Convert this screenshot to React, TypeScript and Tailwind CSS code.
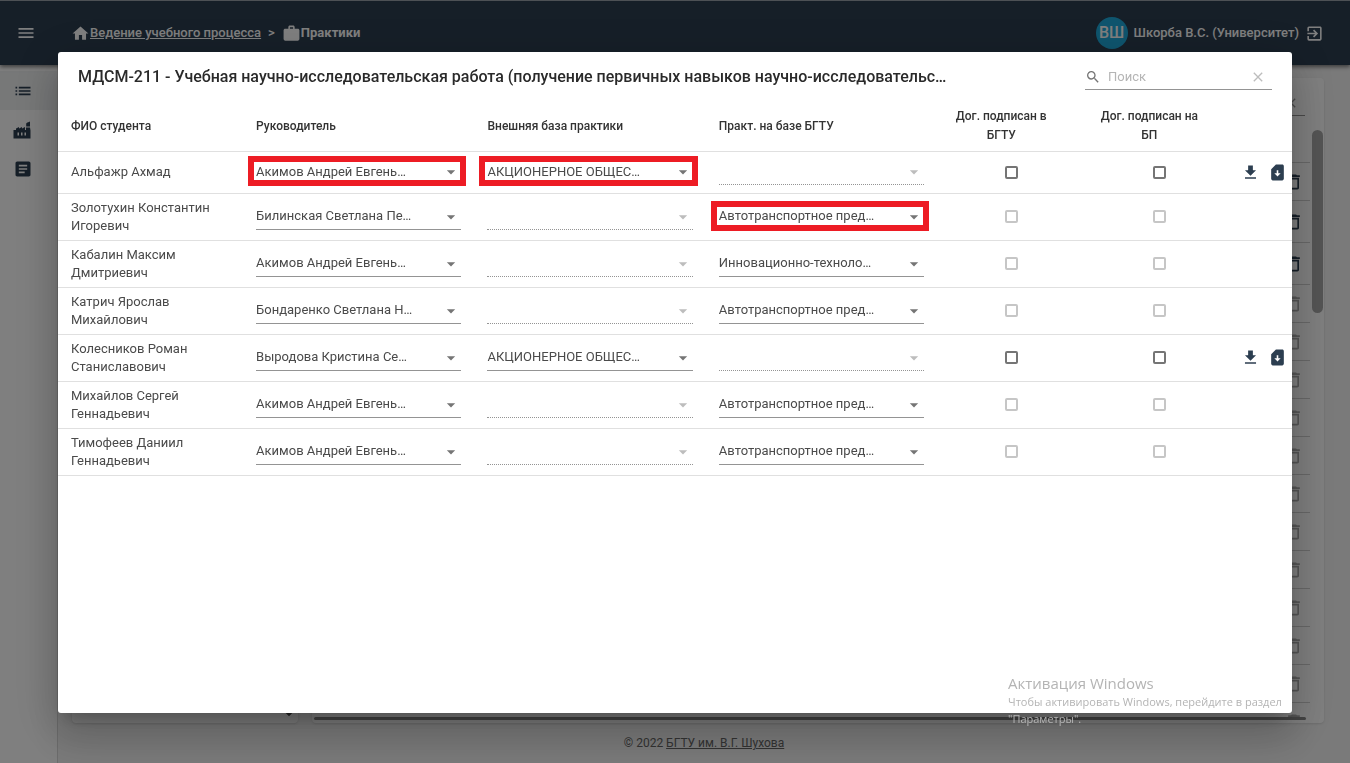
import { useState } from 'react'
import {
  MdMenu,
  MdHome,
  MdWork,
  MdExitToApp,
  MdList,
  MdArticle,
  MdSearch,
  MdClose,
  MdArrowDropDown,
  MdFileDownload,
  MdSimCardDownload,
  MdDeleteOutline,
} from 'react-icons/md'

type Student = {
  name: string
  head: string
  external?: string
  internal?: string
  marks?: string[]
}

const students: Student[] = [
  { name: 'Альфажр Ахмад', head: 'Акимов Андрей Евгень…', external: 'АКЦИОНЕРНОЕ ОБЩЕС…', marks: ['head', 'external'] },
  { name: 'Золотухин Константин Игоревич', head: 'Билинская Светлана Пе…', internal: 'Автотранспортное пред…', marks: ['internal'] },
  { name: 'Кабалин Максим Дмитриевич', head: 'Акимов Андрей Евгень…', internal: 'Инновационно-техноло…' },
  { name: 'Катрич Ярослав Михайлович', head: 'Бондаренко Светлана Н…', internal: 'Автотранспортное пред…' },
  { name: 'Колесников Роман Станиславович', head: 'Выродова Кристина Се…', external: 'АКЦИОНЕРНОЕ ОБЩЕС…' },
  { name: 'Михайлов Сергей Геннадьевич', head: 'Акимов Андрей Евгень…', internal: 'Автотранспортное пред…' },
  { name: 'Тимофеев Даниил Геннадьевич', head: 'Акимов Андрей Евгень…', internal: 'Автотранспортное пред…' },
]

function FactoryIcon() {
  return (
    <svg viewBox="0 0 18 18" className="h-[18px] w-[18px]" fill="currentColor" aria-hidden="true">
      <path
        fillRule="evenodd"
        d="M0.5 17.5V9H3V7.500L6 6v1.500L9 6v1.500L12 6v3h1V6.500h4l.5 3v8zM4.500 11.500v3H6v-3zM8 11.500v3h1.500v-3zM11.500 11.500v3H13v-3z"
      />
      <path d="M13.200 5.500V3c0-1 .8-1.500 1.500-1.500L17 .5v5z" />
    </svg>
  )
}

function SelectCell({ label, value, marked }: { label: string; value?: string; marked?: boolean }) {
  const line = value ? 'border-solid border-[#949494]' : 'border-dotted border-[#949494]'
  return (
    <td className="px-[13px]">
      <div className="relative">
        <select
          aria-label={label}
          disabled={!value}
          className={`block h-[26px] w-full appearance-none border-b bg-transparent pr-5 text-[13px] text-[#4a4a4a] opacity-100 outline-none ${line}`}
        >
          <option>{value ?? ''}</option>
        </select>
        <MdArrowDropDown
          size={20}
          className={`pointer-events-none absolute right-0 top-[3px] ${value ? 'text-[#757575]' : 'text-[#bdbdbd]'}`}
        />
        {marked && (
          <div className="pointer-events-none absolute -bottom-px -left-2 -right-[5px] -top-[3px] border-[6px] border-[#ed1c24]" />
        )}
      </div>
    </td>
  )
}

function CheckCell({ label, disabled }: { label: string; disabled: boolean }) {
  const [checked, setChecked] = useState(false)
  return (
    <td>
      <input
        type="checkbox"
        aria-label={label}
        disabled={disabled}
        checked={checked}
        onChange={(e) => setChecked(e.target.checked)}
        className="mx-auto block h-[13px] w-[13px] appearance-none rounded-[2px] border-2 border-[#757575] checked:bg-[#2c3e50] disabled:border-[#c6c6c6]"
      />
    </td>
  )
}

function StudentRow({ student }: { student: Student }) {
  const signed = Boolean(student.external)
  const tall = student.name.split(' ').length > 2
  return (
    <tr className={`border-b border-[#e0e0e0] ${tall ? 'h-[47px]' : 'h-[42px]'}`}>
      <td className="pl-[13px] pr-6 text-[13px] leading-[18px] text-[#4a4a4a]">{student.name}</td>
      <SelectCell label="Руководитель" value={student.head} marked={student.marks?.includes('head')} />
      <SelectCell label="Внешняя база практики" value={student.external} marked={student.marks?.includes('external')} />
      <SelectCell label="Практ. на базе БГТУ" value={student.internal} marked={student.marks?.includes('internal')} />
      <CheckCell label="Дог. подписан в БГТУ" disabled={!signed} />
      <CheckCell label="Дог. подписан на БП" disabled={!signed} />
      <td>
        {signed && (
          <div className="flex justify-end gap-2 pr-[5px] text-[#2c3e50]">
            <button type="button" aria-label="Скачать">
              <MdFileDownload size={19} />
            </button>
            <button type="button" aria-label="Скачать договор">
              <MdSimCardDownload size={19} />
            </button>
          </div>
        )}
      </td>
    </tr>
  )
}

function PracticeDialog() {
  const [query, setQuery] = useState('')
  return (
    <div className="fixed inset-0 flex bg-black/50 px-[58px] pb-[50px] pt-[52px]">
      <div
        role="dialog"
        aria-label="МДСМ-211"
        className="min-w-0 flex-1 overflow-hidden rounded-[3px] bg-white shadow-[0_11px_15px_-7px_rgba(0,0,0,0.2),0_24px_38px_3px_rgba(0,0,0,0.14),0_9px_46px_8px_rgba(0,0,0,0.12)]"
      >
        <div className="flex h-[50px] items-center justify-between px-5">
          <h2 className="truncate text-[16px] font-medium text-[#2a2a2a]">
            МДСМ-211 - Учебная научно-исследовательская работа (получение первичных навыков научно-исследовательс…
          </h2>
          <div className="flex h-[26px] w-[187px] shrink-0 items-center border-b border-[#949494]">
            <MdSearch size={16} className="text-[#757575]" />
            <input
              aria-label="Поиск"
              placeholder="Поиск"
              value={query}
              onChange={(e) => setQuery(e.target.value)}
              className="ml-[7px] min-w-0 flex-1 text-[13px] outline-none placeholder:text-[#b5b5b5]"
            />
            <button type="button" aria-label="Очистить" className="mr-1.5" onClick={() => setQuery('')}>
              <MdClose size={16} className="text-[#bdbdbd]" />
            </button>
          </div>
        </div>
        <table className="w-full table-fixed border-collapse">
          <thead>
            <tr className="h-[49px] border-b border-[#e0e0e0] text-left text-[12px] leading-[19px] text-[#333]">
              <th className="w-[15%] pl-[13px] font-medium">ФИО студента</th>
              <th className="w-3/16 pl-[13px] font-medium">Руководитель</th>
              <th className="w-3/16 pl-[13px] font-medium">Внешняя база практики</th>
              <th className="w-3/16 pl-[13px] font-medium">Практ. на базе БГТУ</th>
              <th className="w-[12%] pl-3 pr-8 text-center font-medium">Дог. подписан в БГТУ</th>
              <th className="w-[12%] pl-3 pr-8 text-center font-medium">Дог. подписан на БП</th>
              <th aria-label="Действия" />
            </tr>
          </thead>
          <tbody>
            {students.map((s) => (
              <StudentRow key={s.name} student={s} />
            ))}
          </tbody>
        </table>
      </div>
    </div>
  )
}

function Header() {
  return (
    <header className="relative flex h-[65px] shrink-0 items-center border-t border-[#9aa3ab] bg-[#2c3e50] px-4 text-[13px] font-medium text-white shadow-[0_2px_4px_rgba(0,0,0,0.5)]">
      <button type="button" aria-label="Меню">
        <MdMenu size={20} />
      </button>
      <nav className="ml-[35px] flex items-center">
        <MdHome size={19} />
        <a href="#process" className="underline">Ведение учебного процесса</a>
        <span className="mx-[7px]">&gt;</span>
        <MdWork size={19} />
        <span className="font-bold">Практики</span>
      </nav>
      <div className="ml-auto flex items-center pr-2.5">
        <span className="flex h-8 w-8 items-center justify-center rounded-full bg-[#1eaadc] text-[16px]">ВШ</span>
        <span className="ml-1.5">Шкорба В.С. (Университет)</span>
        <button type="button" aria-label="Выйти" className="ml-1.5">
          <MdExitToApp size={19} />
        </button>
      </div>
    </header>
  )
}

function PracticeList() {
  return (
    <div className="flex min-h-0 flex-1 justify-end overflow-hidden">
      <div className="flex-1">
        <div className="ml-auto mr-[7px] mt-3 flex h-[26px] w-[187px] items-center justify-end border-b border-[#949494] pr-1.5">
          <MdClose size={16} className="text-[#999]" />
        </div>
        <ul className="mt-[46px]">
          {Array.from({ length: 15 }, (_, i) => (
            <li
              key={i}
              className={`mr-0.5 flex items-center justify-end border-t border-[#d0d0d0] pr-1.5 ${i === 1 || i === 2 ? 'h-[42px]' : 'h-[38px]'} ${i < 3 ? 'text-[#2c3e50]' : 'text-[#aaa]'}`}
            >
              <MdDeleteOutline size={20} />
            </li>
          ))}
        </ul>
      </div>
      <div className="mr-px mt-[52px] h-[183px] w-[11px] rounded-full bg-[#a8a8a8]" />
    </div>
  )
}

function Backdrop() {
  return (
    <div className="flex min-h-0 flex-1">
      <aside className="flex w-[58px] shrink-0 flex-col border-r border-[#d8d8d8] bg-white pt-1.5 text-[#2c3e50]">
        <a href="#list" aria-label="Список" className="flex h-[39px] items-center bg-[#eef0f1] pl-[13px]">
          <MdList size={20} />
        </a>
        <a href="#bases" aria-label="Базы практик" className="flex h-[39px] items-center pl-[13px]">
          <FactoryIcon />
        </a>
        <a href="#docs" aria-label="Документы" className="flex h-[39px] items-center pl-[13px]">
          <MdArticle size={20} />
        </a>
      </aside>
      <div className="flex min-w-0 flex-1 flex-col bg-[#f5f5f5]">
        <main className="flex min-h-0 flex-1 gap-[14px] pl-[14px] pr-[26px] pt-[13px]">
          <section className="flex w-[226px] shrink-0 items-end justify-end rounded-[4px] bg-white shadow">
            <MdArrowDropDown size={18} className="text-[#444]" />
          </section>
          <section className="flex min-w-0 flex-1 flex-col rounded-[4px] bg-white shadow">
            <PracticeList />
            <div className="mb-[3px] ml-0.5 mr-[18px] h-[3px] shrink-0 rounded bg-[#888]" />
          </section>
        </main>
        <footer className="flex h-10 shrink-0 items-center justify-center text-[12px] text-[#666]">
          © 2022&nbsp;
          <a href="#university" className="underline">БГТУ им. В.Г. Шухова</a>
        </footer>
      </div>
    </div>
  )
}

export default function App() {
  return (
    <div className="flex h-screen flex-col overflow-hidden font-['Roboto',sans-serif]">
      <Header />
      <Backdrop />
      <PracticeDialog />
      <div className="pointer-events-none fixed bottom-[36px] right-[40px] w-[302px] font-['Open_Sans',sans-serif] text-[11px] leading-[17px] text-[#b4b4b4]">
        <p className="text-[15px] leading-5">Активация Windows</p>
        <p className="whitespace-nowrap">Чтобы активировать Windows, перейдите в раздел</p>
        <p>"Параметры".</p>
      </div>
    </div>
  )
}
